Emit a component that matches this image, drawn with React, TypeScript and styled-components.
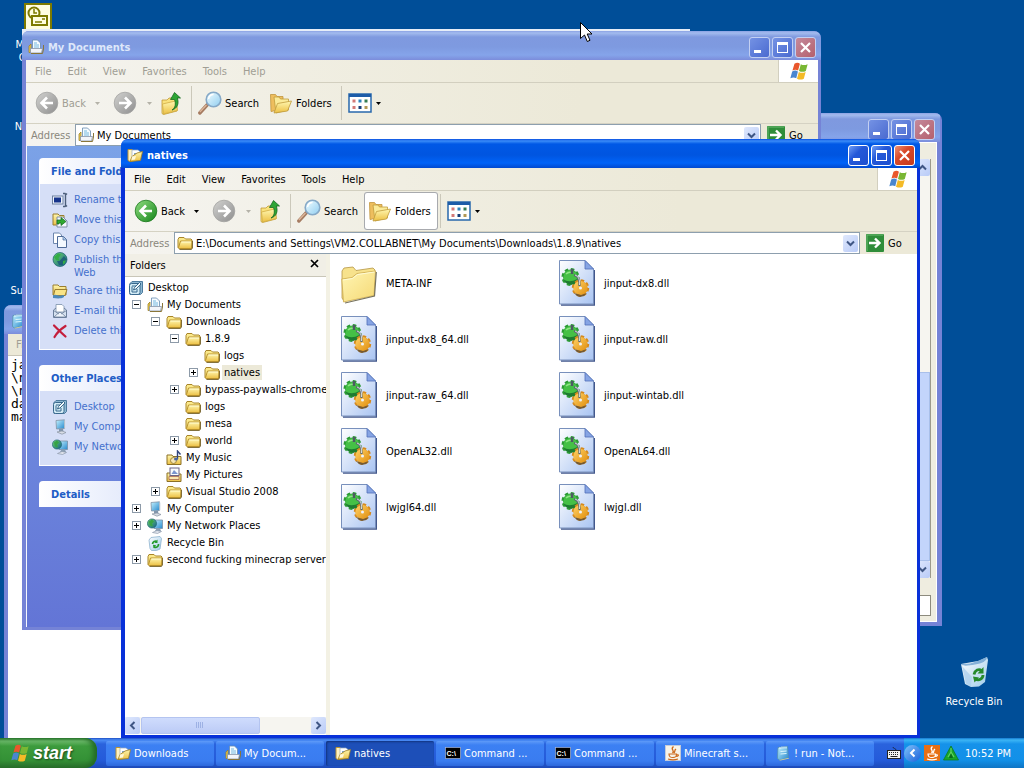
import { ReactNode } from "react";
import styled, { createGlobalStyle, css } from "styled-components";

type IconProps = { size?: number };

const icon = (body: ReactNode, box = 16) =>
  function Icon({ size = box }: IconProps) {
    return (
      <svg width={size} height={size} viewBox={`0 0 ${box} ${box}`} aria-hidden="true">
        {body}
      </svg>
    );
  };

const Gradient = ({ id, from, to, flat }: { id: string; from: string; to: string; flat?: boolean }) => (
  <linearGradient id={id} x1="0" y1="0" x2={flat ? "0" : "1"} y2="1">
    <stop offset="0" stopColor={from} />
    <stop offset="1" stopColor={to} />
  </linearGradient>
);

const SharedGradients = () => (
  <HiddenSvg aria-hidden="true">
    <defs>
      <Gradient id="folder" from="#fff7b0" to="#ecc044" flat />
      <Gradient id="bigfolder" from="#fff6b4" to="#f5d874" />
      <Gradient id="page" from="#ffffff" to="#a9c4f2" />
      <Gradient id="green" from="#8fdc80" to="#15851a" />
      <Gradient id="grey" from="#d2d2d0" to="#8e8e8e" />
      <Gradient id="glass" from="#f2fdff" to="#8fcdf0" />
      <Gradient id="screen" from="#c4f2ff" to="#2789cd" />
      <Gradient id="bin" from="#ffffff" to="#9fcbea" />
      <Gradient id="globe" from="#6fd66a" to="#12608a" />
      <Gradient id="gold" from="#ffd166" to="#e08f10" />
    </defs>
  </HiddenSvg>
);

const FolderIcon = icon(
  <>
    <path d="M1 4.500 2 2.500h5l1.500 1.500h5.500l1 1v8l-1.500 1h-11l-1.500-1.500z" fill="#fbe98a" stroke="#a8852a" />
    <path d="M1.500 12.500 3.500 6h11.500l-.5 7.500h-12z" fill="url(#folder)" stroke="#b8912c" />
    <path d="M4.500 7h9.500" stroke="#fffbd0" />
    <path d="M2.500 14.500h12l1-1.500v-7" fill="none" stroke="#6e5c26" strokeWidth=".8" />
  </>
);

const OpenFolderIcon = icon(
  <>
    <path d="M1 2.500h4l1 1.500h3V13l-6 1.500-2-1z" fill="#fff2c0" stroke="#b69236" />
    <path d="M5 3h6l2.500 2v6H5z" fill="#fff" stroke="#9aa9bd" strokeWidth=".7" />
    <path d="M7 6h3v3H7z" fill="#7fa6cf" />
    <path d="M10 6 15.500 4.500l-2 9-10.500 1 2-5z" fill="url(#folder)" stroke="#9e7c22" strokeWidth=".8" />
    <path d="M5 9.500l4-.5-1 3.500-3.500.5z" fill="#fff8dc" />
  </>
);

const DocsIcon = icon(
  <>
    <path d="M1 7 3 5v8.500H1z" fill="#efd052" stroke="#9c812c" strokeWidth=".8" />
    <path d="M4.500 1h5l3 3v7h-8z" fill="#f5fbff" stroke="#668aae" strokeWidth=".8" />
    <path d="M6 4h3M6 6h5M6 8h5" stroke="#75b8df" />
    <path d="M2.500 9.500h12l-1 4.500h-11z" fill="#f3f5fa" stroke="#8794a8" strokeWidth=".8" />
    <path d="M3 14.500h11.500l1-4.500V6" fill="none" stroke="#8a7638" />
  </>
);

const DesktopIcon = icon(
  <>
    <path d="M2 3.500 4 1.500h10.500v11l-2 2H2z" fill="#8db8d2" stroke="#4d7b9e" />
    <rect x="1.500" y="3.500" width="10.500" height="11" rx="2" fill="#d2ebf5" stroke="#39688d" />
    <path d="M4 6h4M9 9v3H4V6.500" fill="none" stroke="#39688d" />
    <path d="m5.500 10 1-2.500 5-5 1.500 1.500-5 5z" fill="#f5fafc" stroke="#285b80" strokeWidth=".9" />
  </>
);

const ComputerIcon = icon(
  <>
    <path d="M4 1.500 12.500.8v8.700L4.500 10z" fill="url(#screen)" stroke="#8393a5" strokeWidth=".8" />
    <path d="M12.500 1l1 .8V9l-1 .7z" fill="#d7dfe7" />
    <path d="M7 10h4l.5 2.500H7z" fill="#8296ac" />
    <path d="M5 13l5-1 4 1.500-4 1.700z" fill="#d8dde6" stroke="#8792a1" strokeWidth=".7" />
  </>
);

const NetworkIcon = icon(
  <>
    <path d="M6 2h9.500v8.500H7z" fill="url(#screen)" stroke="#7890a7" strokeWidth=".8" />
    <circle cx="5" cy="5.500" r="4.600" fill="url(#globe)" stroke="#165970" strokeWidth=".6" />
    <path d="M2 3.500l3-2 2 2-2 2 1 3-3-1z" fill="#37a345" />
    <path d="M9.500 10.500h3.500l1 2.500H8z" fill="#8ba0b5" />
    <path d="M5.500 14.500 10 12.500l4.500 1-4 2z" fill="#e0e4ec" stroke="#818fa3" strokeWidth=".6" />
  </>
);

const RecycleIcon = icon(
  <>
    <path d="M2 5l2-2.500 9-1 1.500 2-1.500 10.500-3.500 1.500H4.500L3 13.500z" fill="url(#bin)" stroke="#8db3cf" strokeWidth=".8" />
    <path d="M5.500 9a3.200 3.200 0 0 1 4.500-2.500M11.500 9a3 3 0 0 1-4.500 3" fill="none" stroke="#239b2d" strokeWidth="1.700" />
    <path d="M10.500 4.500v3.500H7.500zM6 9.700l3.200.5-2.700 3z" fill="#239b2d" />
  </>
);

const MusicIcon = icon(
  <>
    <path d="M1 5h5l1 1.500h8v8H1z" fill="url(#folder)" stroke="#8c7027" />
    <circle cx="7.500" cy="10.500" r="3" fill="#f5e5b3" stroke="#a0853c" />
    <path d="M11.500 9V1l3 3.500" fill="none" stroke="#31457e" strokeWidth="1.400" />
    <ellipse cx="10" cy="9" rx="2" ry="1.500" fill="#4966a5" />
  </>
);

const PicturesIcon = icon(
  <>
    <path d="M1 6h5l1 1h8v7.500H1z" fill="url(#folder)" stroke="#8c7027" />
    <rect x="4" y="1" width="9" height="7.500" fill="#f8fafc" stroke="#6d6486" />
    <path d="M5.500 7l2.500-4 4 4z" fill="#7a95cf" />
    <path d="M3 9.500h10v3H3z" fill="#fbe7b0" stroke="#a66a59" strokeWidth=".8" />
  </>
);

const RenameIcon = icon(
  <>
    <rect x=".5" y="4" width="10.500" height="8" fill="#eef3fc" stroke="#6f82a0" />
    <rect x="2" y="5.500" width="7" height="5" fill="#16348b" />
    <path d="M11 1.500h2l1 1 1-1M13.500 2v12M11 14.500h2l1-1 1 1" fill="none" stroke="#4d5f7a" strokeWidth="1.400" />
  </>
);

const MoveIcon = icon(
  <>
    <path d="M1 2h5l1.500 1.500H12V13H1z" fill="url(#folder)" stroke="#9a7e30" />
    <path d="M5 5h6l4 4v6H5z" fill="#f4f8fe" stroke="#7f8ea4" />
    <path d="M5 12V8h4V5.500l5 4-5 4V11H7v1z" fill="#2fa92f" stroke="#12651b" strokeWidth=".7" />
  </>
);

const CopyIcon = icon(
  <>
    <path d="M1.500 1h6l2 2v8.500h-8z" fill="#fff" stroke="#6d86ad" />
    <path d="M5.500 4.500h6l3 3v8h-9z" fill="#f4f9ff" stroke="#4f6b98" />
    <path d="M11 4.500v3.500h3.500" fill="#a9c8ee" stroke="#4f6b98" strokeWidth=".7" />
  </>
);

const PublishIcon = icon(
  <>
    <circle cx="8" cy="7.500" r="7" fill="url(#globe)" stroke="#175c6f" strokeWidth=".7" />
    <path d="M2 5l4-3.500 3 1L6.500 6l1 3L4 8zM11 8l3-1-1 4-3 2z" fill="#33ad45" />
    <path d="M7 13 5 9h2.500L12 4l3 4-4 1v4z" fill="#174e78" opacity=".7" />
  </>
);

const ShareIcon = icon(
  <>
    <path d="M1 2h5l1.500 1.500H14V12H1z" fill="url(#folder)" stroke="#9a7e30" />
    <path d="M3 6.500h12l-2 6H1.500z" fill="#f9e486" stroke="#9a7e30" />
    <path d="M1 12.500c3-2 5 1 8 0l3-.5v2c-3 2-7 1.500-11 1z" fill="#4d89b9" />
  </>
);

const EmailIcon = icon(
  <>
    <path d="M1.500 7 8 2l6.500 5v7.500h-13z" fill="#d5e1ef" stroke="#6b7f9c" />
    <path d="M4 1.500h6l2 2V9H4z" fill="#fff" stroke="#7b91aa" strokeWidth=".8" />
    <path d="M2 14l5-4.500h2l5 4.500zM1.500 7.500 7 11M14.500 7.500 9 11" fill="#edf3fa" stroke="#6b7f9c" strokeWidth=".8" />
  </>
);

const DeleteIcon = icon(
  <path d="M2 2.500c3 3 7 7 11.500 11M13.500 3C9 6 5 9.500 2.500 14" fill="none" stroke="#c41e3c" strokeWidth="2.200" strokeLinecap="round" />
);

const CommandIcon = icon(
  <>
    <rect x=".5" y="2.500" width="15" height="11" fill="#000" stroke="#a9b6d2" strokeWidth=".7" />
    <text x="1.500" y="10.500" fontFamily="Liberation Sans, sans-serif" fontSize="7" fontWeight="bold" fill="#fff">
      C:\
    </text>
  </>
);

const javaCup = (color: string) => (
  <>
    <path d="M8.500 1.500c-4 3 2 3.500-1 6.500M11 4c-2 1.500-.5 2-2 4" fill="none" stroke={color} strokeWidth="1.300" />
    <path d="M4 9h7.500c0 3-1 3.500-3.500 3.500S4 12 4 9zM11.500 9.500c3 0 2 2-.5 2M3 14c3 1 7 1 10 0" fill="none" stroke={color} strokeWidth="1.200" />
  </>
);

const JavaIcon = icon(
  <>
    <rect x=".5" y=".5" width="15" height="15" fill="#f7f3e8" stroke="#c5cbd8" />
    {javaCup("#cc6a1c")}
  </>
);

const JavaTrayIcon = icon(
  <>
    <rect width="16" height="16" fill="#e66f14" />
    {javaCup("#ffffff")}
  </>
);

const NotepadIcon = icon(
  <>
    <path d="M3 2.500 12.500 1.500 13.500 13l-9 2-2-1.500z" fill="url(#screen)" stroke="#5491ad" strokeWidth=".8" />
    <path d="M5 2v2M7 1.500v2M9 1.500v2M11 1.500v2" stroke="#e9f8ff" />
    <path d="M5.500 6.500l6-.5M5.500 9l6-.5" stroke="#dff8fd" />
    <path d="M4 15l9-2 1.500.5-9 2z" fill="#d5d19a" />
  </>
);

const TriangleIcon = icon(
  <>
    <path d="M8 1 15.500 15H.5z" fill="#18a62a" stroke="#0d7c22" strokeWidth=".8" />
    <path d="M8 3v4l-3 5M8 7l3 5" fill="none" stroke="#63d260" strokeWidth="1.200" />
    <path d="M8 8.500 10 13H6z" fill="#0c6a1d" />
  </>
);

const KeyboardIcon = icon(
  <>
    <path d="M7 2c0 2 3 1 3 3" stroke="#1d2c4f" fill="none" />
    <rect x="1.500" y="5.500" width="13" height="8" fill="#f2f2ee" stroke="#222" />
    <path d="M3 7.500h10M3 9.500h10" stroke="#222" strokeDasharray="1 1" />
    <path d="M4.500 11.500h7" stroke="#222" />
  </>
);

const arrowDisc = (fill: string, rim: string, back: boolean) => (
  <>
    <circle cx="12" cy="12" r="10.800" fill={fill} stroke={rim} strokeWidth=".8" />
    <path
      d={back ? "M18 12H7M12 6.500 6.500 12l5.500 5.500" : "M6 12h11M12 6.500 17.500 12 12 17.500"}
      fill="none"
      stroke="#fff"
      strokeWidth="2.600"
    />
  </>
);

const BackIcon = icon(arrowDisc("url(#green)", "#1d781f", true), 24);
const BackDisabledIcon = icon(arrowDisc("url(#grey)", "#a5a5a2", true), 24);
const ForwardIcon = icon(arrowDisc("url(#grey)", "#a5a5a2", false), 24);

const UpIcon = icon(
  <>
    <path d="M3 9h5l2-2h8v13l-13.500 3.500-1.500-1z" fill="#f9e27c" stroke="#c29a36" strokeWidth=".8" />
    <path d="M4.500 23 3.500 13l13-3 2 9.500z" fill="url(#folder)" stroke="#d2ad45" strokeWidth=".8" />
    <path d="M13 19c3.500-2 4-6.500 2.500-10.500h-4L15.500 1.500l6 5.500h-3.200c2 5.500 0 10.500-5.300 12z" fill="#2da535" stroke="#176b22" strokeWidth=".8" />
  </>,
  24
);

const SearchIcon = icon(
  <>
    <path d="M1.800 22 9.500 13.500" stroke="#a57b61" strokeWidth="3.400" strokeLinecap="round" />
    <path d="M1.800 21 8.500 14" stroke="#dfb89d" strokeWidth="1.200" />
    <circle cx="15.500" cy="8.500" r="7.300" fill="url(#glass)" stroke="#86a9c7" strokeWidth="1.600" />
    <path d="M10.500 8c.5-3 2.500-4.500 5-4.500" fill="none" stroke="#fff" strokeWidth="1.500" />
  </>,
  24
);

const FoldersIcon = icon(
  <>
    <path d="M1.500 3.500h5l1.500 2h6V18L2 20.500z" fill="#eebe5e" stroke="#c1963d" strokeWidth=".8" />
    <path d="M5 6h5l1.500 2h8v11L7 22z" fill="#fbeb99" stroke="#c09c3c" strokeWidth=".8" />
    <path d="M5 22 8.500 12.500 22.500 10l-4 10z" fill="url(#folder)" stroke="#c09c3c" strokeWidth=".8" />
  </>,
  24
);

const ViewsIcon = icon(
  <>
    <rect x="1" y="3" width="22" height="18" fill="#fff" stroke="#2868ac" strokeWidth="1.500" />
    <path d="M1 4.500h22" stroke="#1d5ca8" strokeWidth="3" />
    <path d="M4.500 8.500h3v3h-3zM4.500 15h3v3h-3z" fill="#d37a78" />
    <path d="M10.500 8.500h3v3h-3z" fill="#2e83bd" />
    <path d="M10.500 15h3v3h-3z" fill="#183e78" />
    <path d="M16.500 8.500h3v3h-3z" fill="#347c52" />
    <path d="M16.500 15h3v3h-3z" fill="#b29855" />
  </>,
  24
);

const FlagIcon = icon(
  <>
    <path d="M6 3c2.500-1.600 4.500-1.200 6 0l-2 7.500c-2-1.300-4-1.300-6.200 0z" fill="#e9572c" />
    <path d="M13 3.500c2.300 1.300 4.500 1.300 7.500 0l-2 7.500c-2.500 1.300-5 1.200-7.500 0z" fill="#79b733" />
    <path d="M3.500 11.500c2.300-1.300 4.300-1.300 6.300 0L8 19c-2-1.300-4-1.300-6.500 0z" fill="#4a86cf" />
    <path d="M10.800 12c2.300 1.300 4.700 1.300 7.500 0l-2 7.500c-2.600 1.300-5 1.200-7.500 0z" fill="#f4ba27" />
  </>,
  22
);

const GoIcon = icon(
  <>
    <rect width="18" height="18" rx="1" fill="#2f8d3a" />
    <path d="M1 17V1h16" stroke="#6dbb70" fill="none" />
    <path d="M3 9h10M9 4.500 13.500 9 9 13.500" fill="none" stroke="#fff" strokeWidth="2.400" />
  </>,
  18
);

const OutlookIcon = icon(
  <>
    <rect x="1" y="1" width="26" height="26" fill="#fffde0" stroke="#7d7a00" strokeWidth="2" />
    <circle cx="10" cy="10" r="5.500" fill="#fffde0" stroke="#7d7a00" strokeWidth="2" />
    <path d="M10 6v4h3" fill="none" stroke="#7d7a00" strokeWidth="1.500" />
    <rect x="8" y="13" width="15" height="9" fill="#fffde0" stroke="#7d7a00" strokeWidth="2" />
    <path d="M11 19h7M18 16h3" stroke="#7d7a00" strokeWidth="1.500" />
  </>,
  28
);

const LargeRecycleIcon = icon(
  <>
    <path d="M3 8 20 5l9-4 1 3-3 22-6 4.500-8 .5-6-3z" fill="url(#bin)" />
    <path d="M3 8 12 7.500 20 5l9-4c0 4-5 6.500-12 7.500-6 1-11 2-14 0z" fill="#5f97cb" opacity=".7" />
    <path d="M4 10 14 21l-1 9.500-5-3z" fill="#a9cdec" opacity=".7" />
    <path d="M16 18.500c1-4.500 5-6 7.500-4M25 19c0 4-4.500 6-7.500 4" fill="none" stroke="#258a2b" strokeWidth="2.800" />
    <path d="M25.500 11v6.500h-6zM15 20.500l6 1-4.500 5z" fill="#258a2b" />
  </>,
  32
);

const LargeFolder = () => (
  <svg width="36" height="46" viewBox="0 0 36 46" aria-hidden="true">
    <path d="M1 11 3 8l9-1 3 3.500 17-2.500 2 2-1 24-30 7-2-3z" fill="#f7e28c" stroke="#b59645" strokeWidth=".8" />
    <path d="M2.500 42 .8 19 11 17.500l5-4L34.500 11 33 35.500z" fill="url(#bigfolder)" stroke="#cba94c" strokeWidth=".8" />
    <path d="M4 43 33.500 36 35.300 12" fill="none" stroke="#77735f" strokeWidth="1.200" />
    <path d="M2 20 11.500 18.500l5-4L33.500 12" fill="none" stroke="#fffbd5" />
  </svg>
);

const DllIcon = () => (
  <svg width="36" height="46" viewBox="0 0 36 46" aria-hidden="true">
    <path d="M2 45h33.500V10" fill="none" stroke="#42578c" strokeWidth="1.600" />
    <path d="M.5.500H26L34.500 9v35H.5z" fill="url(#page)" stroke="#7890bc" />
    <path d="M26 .5V9h8.500z" fill="#86a4e4" stroke="#5270b8" strokeWidth=".8" />
    <circle cx="11.500" cy="17" r="7.500" fill="#35ad39" stroke="#2c9a35" strokeWidth="3" strokeDasharray="3.400 2.500" />
    <circle cx="11.500" cy="17" r="7" fill="#45c046" />
    <path d="M4 19c4 3 9 3 14 0l-1 4-5 2-5-2z" fill="#1e7b31" />
    <path d="M7 14c2-2 5-2 7-1" fill="none" stroke="#8fe584" strokeWidth="1.500" />
    <circle cx="21.500" cy="28" r="7.200" fill="#efa42b" stroke="#d68a1c" strokeWidth="3" strokeDasharray="3.300 2.350" />
    <circle cx="21.500" cy="28" r="7" fill="url(#gold)" />
    <path d="m15 33 3 3 3 1 4-1 3-3-6 2z" fill="#765a32" />
    <circle cx="21.500" cy="28" r="1.500" fill="#eef3fc" />
    <path d="M13 9v5" stroke="#4d5a63" strokeWidth="2.500" />
    <path d="M15 15c4 1 6 4 5.500 11" fill="none" stroke="#5b6870" strokeWidth="2.200" />
    <path d="M16 15c3 1 5 4 4.500 10" fill="none" stroke="#d8dde2" />
  </svg>
);

const CaptionGlyph = ({ kind }: { kind: "min" | "max" | "close" }) => (
  <svg width="19" height="19" viewBox="0 0 19 19" aria-hidden="true">
    {kind === "min" && <path d="M4 12h7v3H4z" fill="#fff" />}
    {kind === "max" && <path d="M4 4h11v11H4zM5 7v7h9V7z" fill="#fff" fillRule="evenodd" />}
    {kind === "close" && <path d="m5 5 9 9M14 5l-9 9" stroke="#fff" strokeWidth="2.200" />}
  </svg>
);

const Chevron = ({ turn = 0 }: { turn?: number }) => (
  <svg width="9" height="9" viewBox="0 0 9 9" aria-hidden="true">
    <path d="m1 2.500 3.500 3.500L8 2.500" fill="none" stroke="#3f5684" strokeWidth="2" transform={`rotate(${turn} 4.5 4.5)`} />
  </svg>
);

const TinyArrow = ({ muted }: { muted?: boolean }) => (
  <svg width="5" height="3" viewBox="0 0 5 3" aria-hidden="true">
    <path d="M0 0h5L2.500 3z" fill={muted ? "#b4b2a8" : "#000"} />
  </svg>
);

const menus = ["File", "Edit", "View", "Favorites", "Tools", "Help"];

const tree = [
  { label: "Desktop", level: 0, Icon: DesktopIcon },
  { label: "My Documents", level: 1, Icon: DocsIcon, mark: "-" },
  { label: "Downloads", level: 2, Icon: FolderIcon, mark: "-" },
  { label: "1.8.9", level: 3, Icon: FolderIcon, mark: "-" },
  { label: "logs", level: 4, Icon: FolderIcon },
  { label: "natives", level: 4, Icon: FolderIcon, mark: "+", selected: true },
  { label: "bypass-paywalls-chrome-", level: 3, Icon: FolderIcon, mark: "+" },
  { label: "logs", level: 3, Icon: FolderIcon },
  { label: "mesa", level: 3, Icon: FolderIcon },
  { label: "world", level: 3, Icon: FolderIcon, mark: "+" },
  { label: "My Music", level: 2, Icon: MusicIcon },
  { label: "My Pictures", level: 2, Icon: PicturesIcon },
  { label: "Visual Studio 2008", level: 2, Icon: FolderIcon, mark: "+" },
  { label: "My Computer", level: 1, Icon: ComputerIcon, mark: "+" },
  { label: "My Network Places", level: 1, Icon: NetworkIcon, mark: "+" },
  { label: "Recycle Bin", level: 1, Icon: RecycleIcon },
  { label: "second fucking minecrap server", level: 1, Icon: FolderIcon, mark: "+" },
];

const files = [
  "META-INF",
  "jinput-dx8.dll",
  "jinput-dx8_64.dll",
  "jinput-raw.dll",
  "jinput-raw_64.dll",
  "jinput-wintab.dll",
  "OpenAL32.dll",
  "OpenAL64.dll",
  "lwjgl64.dll",
  "lwjgl.dll",
];

const folderTasks = [
  { label: "Rename this folder", Icon: RenameIcon },
  { label: "Move this folder", Icon: MoveIcon },
  { label: "Copy this folder", Icon: CopyIcon },
  { label: "Publish this folder to the Web", Icon: PublishIcon },
  { label: "Share this folder", Icon: ShareIcon },
  { label: "E-mail this folder's files", Icon: EmailIcon },
  { label: "Delete this folder", Icon: DeleteIcon },
];

const places = [
  { label: "Desktop", Icon: DesktopIcon },
  { label: "My Computer", Icon: ComputerIcon },
  { label: "My Network Places", Icon: NetworkIcon },
];

const tasks = [
  { label: "Downloads", Icon: OpenFolderIcon },
  { label: "My Docum...", Icon: DocsIcon },
  { label: "natives", Icon: OpenFolderIcon, active: true },
  { label: "Command ...", Icon: CommandIcon },
  { label: "Command ...", Icon: CommandIcon },
  { label: "Minecraft s...", Icon: JavaIcon },
  { label: "! run - Not...", Icon: NotepadIcon },
];

const WindowTitle = ({ title, active, children }: { title: string; active?: boolean; children?: ReactNode }) => (
  <TitleBar $active={active}>
    {children}
    <TitleText $active={active}>{title}</TitleText>
    <CaptionButton $active={active} aria-label="Minimize">
      <CaptionGlyph kind="min" />
    </CaptionButton>
    <CaptionButton $active={active} aria-label="Maximize">
      <CaptionGlyph kind="max" />
    </CaptionButton>
    <CaptionButton $active={active} $close aria-label="Close">
      <CaptionGlyph kind="close" />
    </CaptionButton>
  </TitleBar>
);

type ExplorerProps = {
  id: string;
  title: string;
  address: string;
  active?: boolean;
  titleIcon: ReactNode;
  addressIcon: ReactNode;
  children: ReactNode;
};

function Explorer({ id, title, address, active, titleIcon, addressIcon, children }: ExplorerProps) {
  return (
    <>
      <WindowTitle title={title} active={active}>
        {titleIcon}
      </WindowTitle>
      <MenuBar>
        {menus.map((item) => (
          <MenuButton key={item} $muted={!active}>
            {item}
          </MenuButton>
        ))}
        <FlagBox>
          <FlagIcon size={20} />
        </FlagBox>
      </MenuBar>
      <Toolbar>
        <ToolButton $width={54} disabled={!active}>
          {active ? <BackIcon /> : <BackDisabledIcon />}
          Back
        </ToolButton>
        <DropButton $width={24} aria-label="Back history">
          <TinyArrow muted={!active} />
        </DropButton>
        <ToolButton $width={34} aria-label="Forward" disabled>
          <ForwardIcon />
        </ToolButton>
        <DropButton $width={12} aria-label="Forward history">
          <TinyArrow muted />
        </DropButton>
        <ToolButton $width={34} aria-label="Up">
          <UpIcon />
        </ToolButton>
        <Separator />
        <ToolButton $width={71}>
          <SearchIcon />
          Search
        </ToolButton>
        <ToolButton $width={74} $pressed={active}>
          <FoldersIcon />
          Folders
        </ToolButton>
        <Separator />
        <ToolButton $width={30} aria-label="Views">
          <ViewsIcon />
        </ToolButton>
        <DropButton $width={8} aria-label="View options">
          <TinyArrow />
        </DropButton>
      </Toolbar>
      <AddressBar>
        <AddressLabel htmlFor={id}>Address</AddressLabel>
        <AddressBox>
          {addressIcon}
          <AddressInput id={id} defaultValue={address} />
          <ScrollButton aria-label="Show addresses">
            <Chevron />
          </ScrollButton>
        </AddressBox>
        <GoButton>
          <GoIcon />
          Go
        </GoButton>
      </AddressBar>
      <Content>{children}</Content>
    </>
  );
}

function TaskCard({ title, items }: { title: string; items?: typeof places }) {
  return (
    <Card>
      <CardHeader>{title}</CardHeader>
      {items && (
        <CardBody>
          {items.map(({ label, Icon }) => (
            <CardLink key={label} href="#">
              <Icon />
              <span>{label}</span>
            </CardLink>
          ))}
        </CardBody>
      )}
    </Card>
  );
}

function App() {
  return (
    <Screen>
      <GlobalStyle />
      <SharedGradients />
      <Desktop>
        <Shortcut $top={3}>
          <OutlookIcon />
          <ShortcutLabel>Microsoft Outlook</ShortcutLabel>
        </Shortcut>
        <Shortcut $top={120}>
          <ShortcutLabel>Netscape</ShortcutLabel>
        </Shortcut>
        <Shortcut $top={284}>
          <ShortcutLabel>Subversion</ShortcutLabel>
        </Shortcut>
        <Shortcut $top={366}>
          <ShortcutLabel>TortoiseSVN</ShortcutLabel>
        </Shortcut>
        <RecycleShortcut>
          <LargeRecycleIcon />
          <ShortcutLabel>Recycle Bin</ShortcutLabel>
        </RecycleShortcut>

        <HiddenWindow />

        <ChatWindow>
          <WindowTitle title="" />
          <ChatBody>
            <ChatLog>
              <VerticalScroll>
                <ScrollButton aria-label="Scroll up">
                  <Chevron turn={180} />
                </ScrollButton>
                <VerticalThumb />
                <ScrollButton aria-label="Scroll down">
                  <Chevron />
                </ScrollButton>
              </VerticalScroll>
            </ChatLog>
            <ChatInput aria-label="Message" />
          </ChatBody>
        </ChatWindow>

        <NotepadWindow>
          <WindowTitle title="! run - Notepad">
            <NotepadIcon />
          </WindowTitle>
          <NotepadMenu>
            <MenuButton $muted>File</MenuButton>
          </NotepadMenu>
          <NotepadText aria-label="Text" defaultValue={"java\n\\natives\n\\natives\ndata\nmain"} />
        </NotepadWindow>

        <DocumentsWindow>
          <Explorer
            id="documents-address"
            title="My Documents"
            address="My Documents"
            titleIcon={<DocsIcon />}
            addressIcon={<DocsIcon />}
          >
            <TaskPane>
              <TaskCard title="File and Folder Tasks" items={folderTasks} />
              <TaskCard title="Other Places" items={places} />
              <TaskCard title="Details" />
            </TaskPane>
          </Explorer>
        </DocumentsWindow>

        <NativesWindow>
          <Explorer
            id="natives-address"
            title="natives"
            address="E:\Documents and Settings\VM2.COLLABNET\My Documents\Downloads\1.8.9\natives"
            active
            titleIcon={<OpenFolderIcon />}
            addressIcon={<FolderIcon />}
          >
            <FolderPane>
              <PaneHeader>
                Folders
                <PaneClose aria-label="Close folders">
                  <svg width="9" height="9" viewBox="0 0 9 9" aria-hidden="true">
                    <path d="m1 1 7 7M8 1 1 8" stroke="#000" strokeWidth="1.700" />
                  </svg>
                </PaneClose>
              </PaneHeader>
              <Tree>
                {tree.map(({ label, level, Icon, mark, selected }, index) => (
                  <TreeRow key={index} $level={level}>
                    {level > 0 && (
                      <Slot>
                        {mark && (
                          <Expander aria-label={`Toggle ${label}`}>
                            <svg width="7" height="7" viewBox="0 0 7 7" aria-hidden="true">
                              <path d={mark === "+" ? "M1 3.500h5M3.500 1v5" : "M1 3.500h5"} stroke="#000" />
                            </svg>
                          </Expander>
                        )}
                      </Slot>
                    )}
                    <Icon />
                    <TreeLabel $selected={selected}>{label}</TreeLabel>
                  </TreeRow>
                ))}
              </Tree>
              <HorizontalScroll>
                <ScrollButton aria-label="Scroll left">
                  <Chevron turn={90} />
                </ScrollButton>
                <Track>
                  <HorizontalThumb>
                    <svg width="9" height="7" viewBox="0 0 9 7" aria-hidden="true">
                      <path d="M.5 0v6M2.500 0v6M4.500 0v6M6.500 0v6" stroke="#9db1e4" />
                    </svg>
                  </HorizontalThumb>
                </Track>
                <ScrollButton aria-label="Scroll right">
                  <Chevron turn={-90} />
                </ScrollButton>
              </HorizontalScroll>
            </FolderPane>
            <FileList>
              {files.map((name) => (
                <FileItem key={name}>
                  {name.endsWith(".dll") ? <DllIcon /> : <LargeFolder />}
                  {name}
                </FileItem>
              ))}
            </FileList>
          </Explorer>
        </NativesWindow>

        <Pointer width="13" height="21" viewBox="0 0 13 21" aria-hidden="true">
          <path d="M.5.500v16l4-3.500 2.800 6.500 2.700-1.200L7.200 12H12z" fill="#fff" stroke="#000" />
        </Pointer>
      </Desktop>

      <Taskbar>
        <StartButton>
          <FlagIcon size={20} />
          start
        </StartButton>
        <TaskList>
          {tasks.map(({ label, Icon, active }, index) => (
            <TaskButton key={index} $active={active}>
              <Icon />
              {label}
            </TaskButton>
          ))}
        </TaskList>
        <LanguageButton aria-label="Keyboard">
          <KeyboardIcon />
        </LanguageButton>
        <Tray>
          <TrayToggle aria-label="Show hidden icons">
            <svg width="10" height="10" viewBox="0 0 10 10" aria-hidden="true">
              <path d="M6.500 1.500 3 5l3.500 3.500" fill="none" stroke="#fff" strokeWidth="2" />
            </svg>
          </TrayToggle>
          <JavaTrayIcon />
          <TriangleIcon />
          <Clock>10:52 PM</Clock>
        </Tray>
      </Taskbar>
    </Screen>
  );
}

export default App;

const GlobalStyle = createGlobalStyle`
  * {
    box-sizing: border-box;
  }

  body {
    margin: 0;
    overflow: hidden;
    font-family: "DejaVu Sans Condensed", "DejaVu Sans", sans-serif;
    font-size: 11px;
    line-height: 13px;
    color: #000;
  }

  button, input, textarea {
    padding: 0;
    border: 0;
    border-radius: 0;
    background: none;
    color: inherit;
    font: inherit;
  }

  ul {
    margin: 0;
    padding: 0;
    list-style: none;
  }

  svg {
    flex: none;
    display: block;
  }
`;

const HiddenSvg = styled.svg`
  position: absolute;
  width: 0;
  height: 0;
`;

const Screen = styled.div`
  display: flex;
  flex-direction: column;
  height: 100vh;
  background: #004e98;
`;

const Desktop = styled.main`
  position: relative;
  flex: 1;
  min-height: 0;
  overflow: hidden;
`;

const Shortcut = styled.div<{ $top?: number }>`
  position: absolute;
  left: 0;
  top: ${({ $top = 0 }) => $top}px;
  width: 76px;
  display: flex;
  flex-direction: column;
  align-items: center;
  gap: 7px;
`;

const RecycleShortcut = styled(Shortcut)`
  left: auto;
  top: auto;
  right: 12px;
  bottom: 30px;
`;

const ShortcutLabel = styled.span`
  max-width: 60px;
  color: #fff;
  text-align: center;
`;

const Window = styled.section<{ $active?: boolean }>`
  position: absolute;
  display: flex;
  flex-direction: column;
  overflow: hidden;
  padding: 0 3px 3px 4px;
  border-radius: 7px 7px 0 0;
  background: ${({ $active }) => ($active ? "#0831d9" : "#7583d6")};
`;

const HiddenWindow = styled(Window)`
  inset: 29px 334px 400px 22px;
  background: #e6edf8;
  border-radius: 0;
`;

const ChatWindow = styled(Window)`
  inset: 113px 82px 112px 300px;
  padding: 0 5px 4px 4px;
`;

const NotepadWindow = styled(Window)`
  inset: 305px 400px 0 4px;
  padding-bottom: 0;
`;

const DocumentsWindow = styled(Window)`
  inset: 31px 203px 108px 22px;
`;

const NativesWindow = styled(Window).attrs({ $active: true })`
  inset: 139px 104px 0 121px;
`;

const TitleBar = styled.header<{ $active?: boolean }>`
  flex: none;
  display: flex;
  align-items: center;
  gap: 2px;
  height: 29px;
  margin: 0 -3px 0 -4px;
  padding: 3px 5px 0 6px;
  background: ${({ $active }) =>
    $active
      ? "linear-gradient(#0a4fe0, #3a8cf8 2px, #0058e6 5px, #0055e0 16px, #0063f8 24px, #0149cf)"
      : "linear-gradient(#8ba2e4, #a3bbee 2px, #7f99df 6px, #7e9ae0 16px, #85a4ea 24px, #7c8ddb)"};
`;

const TitleText = styled.h1<{ $active?: boolean }>`
  flex: 1;
  margin: 0 0 0 2px;
  font-size: 11px;
  line-height: 13px;
  font-weight: bold;
  color: ${({ $active }) => ($active ? "#fff" : "#dde7fa")};
`;

const CaptionButton = styled.button<{ $active?: boolean; $close?: boolean }>`
  display: grid;
  place-items: center;
  width: 21px;
  height: 21px;
  border: 1px solid ${({ $active }) => ($active ? "#fff" : "#c3d0f2")};
  border-radius: 3px;
  background: ${({ $active, $close }) =>
    $close
      ? $active
        ? "linear-gradient(135deg, #ee9273, #d9492a 40%, #c43a1d)"
        : "linear-gradient(135deg, #c48a9c, #b5606c)"
      : $active
        ? "linear-gradient(135deg, #6f9df5, #2458d8 40%, #1d4fcf)"
        : "linear-gradient(135deg, #7492e4, #4a6ad0)"};
`;

const barColors = css`
  background: linear-gradient(to right, #f5f4f0, #f0eee2 35%, #ece9d8 70%);
`;

const MenuBar = styled.nav`
  ${barColors}
  flex: none;
  display: flex;
  align-items: stretch;
  height: 23px;
  padding-left: 1px;
  border-bottom: 1px solid #d2cfbf;
`;

const MenuButton = styled.button<{ $muted?: boolean }>`
  padding: 0 8px;
  color: ${({ $muted }) => ($muted ? "#a09e94" : "#000")};
`;

const FlagBox = styled.div`
  display: grid;
  place-items: center;
  width: 40px;
  margin-left: auto;
  border-left: 1px solid #d2cfbf;
  background: #fff;
`;

const Toolbar = styled.div`
  ${barColors}
  flex: none;
  display: flex;
  align-items: center;
  height: 40px;
  padding-left: 5px;
`;

const ToolButton = styled.button<{ $width: number; $pressed?: boolean }>`
  display: flex;
  align-items: center;
  gap: 3px;
  width: ${({ $width }) => $width}px;
  height: 38px;
  padding-left: 4px;
  border-radius: 3px;

  ${({ $pressed }) =>
    $pressed &&
    css`
      background: #fff;
      box-shadow: inset 0 0 0 1px #a8aaae;
    `}

  &:disabled {
    color: #a09e94;
  }
`;

const DropButton = styled.button<{ $width: number }>`
  display: grid;
  place-items: center;
  width: ${({ $width }) => $width}px;
  height: 38px;
`;

const Separator = styled.div`
  width: 1px;
  height: 34px;
  margin: 0 2px;
  background: #cbc8ba;
`;

const AddressBar = styled.div`
  ${barColors}
  flex: none;
  display: flex;
  align-items: stretch;
  height: 23px;
  padding-left: 5px;
  border-top: 1px solid #d5d2c3;
`;

const AddressLabel = styled.label`
  align-self: center;
  width: 44px;
  color: #8a877c;
`;

const AddressBox = styled.div`
  flex: 1;
  display: flex;
  align-items: center;
  gap: 3px;
  padding: 1px 1px 1px 2px;
  border: 1px solid #8d9fae;
  background: #fff;
`;

const AddressInput = styled.input`
  flex: 1;
  min-width: 0;
  outline: none;
`;

const GoButton = styled.button`
  display: flex;
  align-items: center;
  gap: 4px;
  width: 57px;
  padding-left: 6px;
`;

const ScrollButton = styled.button`
  flex: none;
  display: grid;
  place-items: center;
  width: 15px;
  height: 17px;
  border-radius: 2px;
  background: linear-gradient(135deg, #dfe8fd, #b9cbf7);
`;

const Content = styled.div`
  flex: 1;
  display: flex;
  min-height: 0;
  background: #fff;
`;

const TaskPane = styled.aside`
  width: 213px;
  padding: 12px 12px 0 12px;
  border-left: 1px solid #f5f7fd;
  background: linear-gradient(#7ba2e7, #6375d6);
`;

const Card = styled.section`
  margin-bottom: 15px;
`;

const CardHeader = styled.h2`
  margin: 0;
  height: 26px;
  padding: 0 12px;
  border-radius: 4px 4px 0 0;
  background: linear-gradient(to right, #fff, #c6d3f7);
  color: #215dc6;
  font-size: 11px;
  font-weight: bold;
  line-height: 27px;
`;

const CardBody = styled.div`
  display: flex;
  flex-direction: column;
  gap: 4px;
  padding: 8px 12px 10px;
  border: 1px solid #fff;
  border-top: 0;
  background: #d6dff7;
`;

const CardLink = styled.a`
  display: flex;
  gap: 6px;
  min-height: 16px;
  color: #4470cc;
  text-decoration: none;

  span {
    padding-top: 1px;
  }
`;

const FolderPane = styled.aside`
  flex: none;
  display: flex;
  flex-direction: column;
  width: 205px;
  overflow: hidden;
  border-right: 4px solid #f3f1e4;
`;

const PaneHeader = styled.div`
  flex: none;
  display: flex;
  align-items: center;
  justify-content: space-between;
  height: 23px;
  padding: 0 7px 0 5px;
  border-bottom: 1px solid #c9c6b8;
  background: #f1efe6;
`;

const PaneClose = styled.button`
  padding-bottom: 4px;
`;

const Tree = styled.ul`
  flex: 1;
  padding-top: 2px;
  overflow: hidden;
`;

const TreeRow = styled.li<{ $level: number }>`
  display: flex;
  align-items: center;
  height: 17px;
  padding-left: ${({ $level }) => ($level ? $level * 19 - 12 : 3)}px;
  white-space: nowrap;
`;

const Slot = styled.span`
  flex: none;
  width: 15px;
`;

const Expander = styled.button`
  display: grid;
  place-items: center;
  width: 9px;
  height: 9px;
  border: 1px solid #8d9aa8;
  background: #fff;
`;

const TreeLabel = styled.span<{ $selected?: boolean }>`
  padding: 1px 2px;
  margin-left: 2px;
  background: ${({ $selected }) => ($selected ? "#ece9d8" : "none")};
`;

const HorizontalScroll = styled.div`
  flex: none;
  display: flex;
  height: 17px;
  margin-bottom: 1px;
  background: #f6f5f0;
`;

const Track = styled.div`
  flex: 1;
  padding-left: 1px;
`;

const HorizontalThumb = styled.div`
  display: grid;
  place-items: center;
  width: 70%;
  height: 17px;
  border: 1px solid #b4c4f0;
  border-radius: 2px;
  background: linear-gradient(#cfdcfd, #bccbf6);
`;

const FileList = styled.ul`
  flex: 1;
  display: grid;
  grid-template-columns: repeat(auto-fill, 218px);
  grid-auto-rows: 56px;
  align-content: start;
  padding: 1px 0 0 11px;
`;

const FileItem = styled.li`
  display: flex;
  align-items: center;
  gap: 9px;
`;

const ChatBody = styled.div`
  flex: 1;
  display: flex;
  flex-direction: column;
  gap: 17px;
  min-height: 0;
  padding: 16px 5px 5px;
  border: 1px solid #fff;
  background: #efede0;
`;

const ChatLog = styled.div`
  flex: 1;
  display: flex;
  justify-content: flex-end;
  min-height: 0;
  background: #fff;
`;

const VerticalScroll = styled.div`
  display: flex;
  flex-direction: column;
  width: 16px;
  border-right: 1px solid #9c9a8c;
  background: #f6f5f0;
`;

const VerticalThumb = styled.div`
  flex: none;
  height: 45%;
  margin-top: auto;
  border: 1px solid #a9c0ea;
  background: #c3d5fb;
`;

const ChatInput = styled.input`
  flex: none;
  height: 21px;
  border: 1px solid #8d8b7e;
  background: #fff;
`;

const NotepadMenu = styled.nav`
  flex: none;
  display: flex;
  height: 22px;
  background: #ece9d8;
  border-bottom: 1px solid #c9c6b8;
`;

const NotepadText = styled.textarea`
  flex: 1;
  padding: 2px 3px;
  border: 0;
  outline: none;
  resize: none;
  background: #fff;
  font-family: "DejaVu Sans Mono", monospace;
  font-size: 13px;
  line-height: 13px;
`;

const Pointer = styled.svg`
  position: absolute;
  left: 580px;
  top: 22px;
`;

const Taskbar = styled.footer`
  flex: none;
  display: flex;
  height: 30px;
  background: linear-gradient(#1f4fc4, #4a8cf5 2px, #2a63dd 6px, #245bda 22px, #1d4ab8);
  color: #fff;
`;

const StartButton = styled.button`
  display: flex;
  align-items: center;
  gap: 3px;
  width: 97px;
  padding: 0 0 0 10px;
  border-radius: 0 12px 12px 0;
  background: linear-gradient(#2f7f33, #6cba6a 3px, #3c9b3d 8px, #349136 22px, #2a6f2c);
  box-shadow: inset -4px 0 5px #236b25;
  font-family: "Liberation Sans", sans-serif;
  font-size: 18px;
  font-style: italic;
  font-weight: bold;
  text-shadow: 1px 1px 2px #1b4a1c;
`;

const TaskList = styled.div`
  flex: 1;
  display: flex;
  align-items: center;
  gap: 2px;
  min-width: 0;
  padding-left: 9px;
`;

const TaskButton = styled.button<{ $active?: boolean }>`
  flex: 0 1 108px;
  display: flex;
  align-items: center;
  gap: 3px;
  min-width: 0;
  height: 25px;
  padding-left: 9px;
  border-radius: 2px;
  white-space: nowrap;
  background: ${({ $active }) => ($active ? "#1d4fb8" : "linear-gradient(#5e9af8, #3c80f3 4px, #3a7cf0 20px, #2d68dc)")};
  box-shadow: ${({ $active }) => ($active ? "inset 1px 1px 2px #12347f" : "none")};
`;

const LanguageButton = styled.button`
  display: grid;
  place-items: center;
  width: 20px;
`;

const Tray = styled.div`
  display: flex;
  align-items: center;
  gap: 3px;
  width: 120px;
  background: linear-gradient(#1379d0, #3cb5f5 2px, #1592ea 6px, #1290e8 22px, #0f74c4);
`;

const TrayToggle = styled.button`
  display: grid;
  place-items: center;
  width: 17px;
  height: 17px;
  border-radius: 50%;
  background: linear-gradient(135deg, #7ec4fb, #1a5fd8);
`;

const Clock = styled.time`
  padding-left: 3px;
`;
